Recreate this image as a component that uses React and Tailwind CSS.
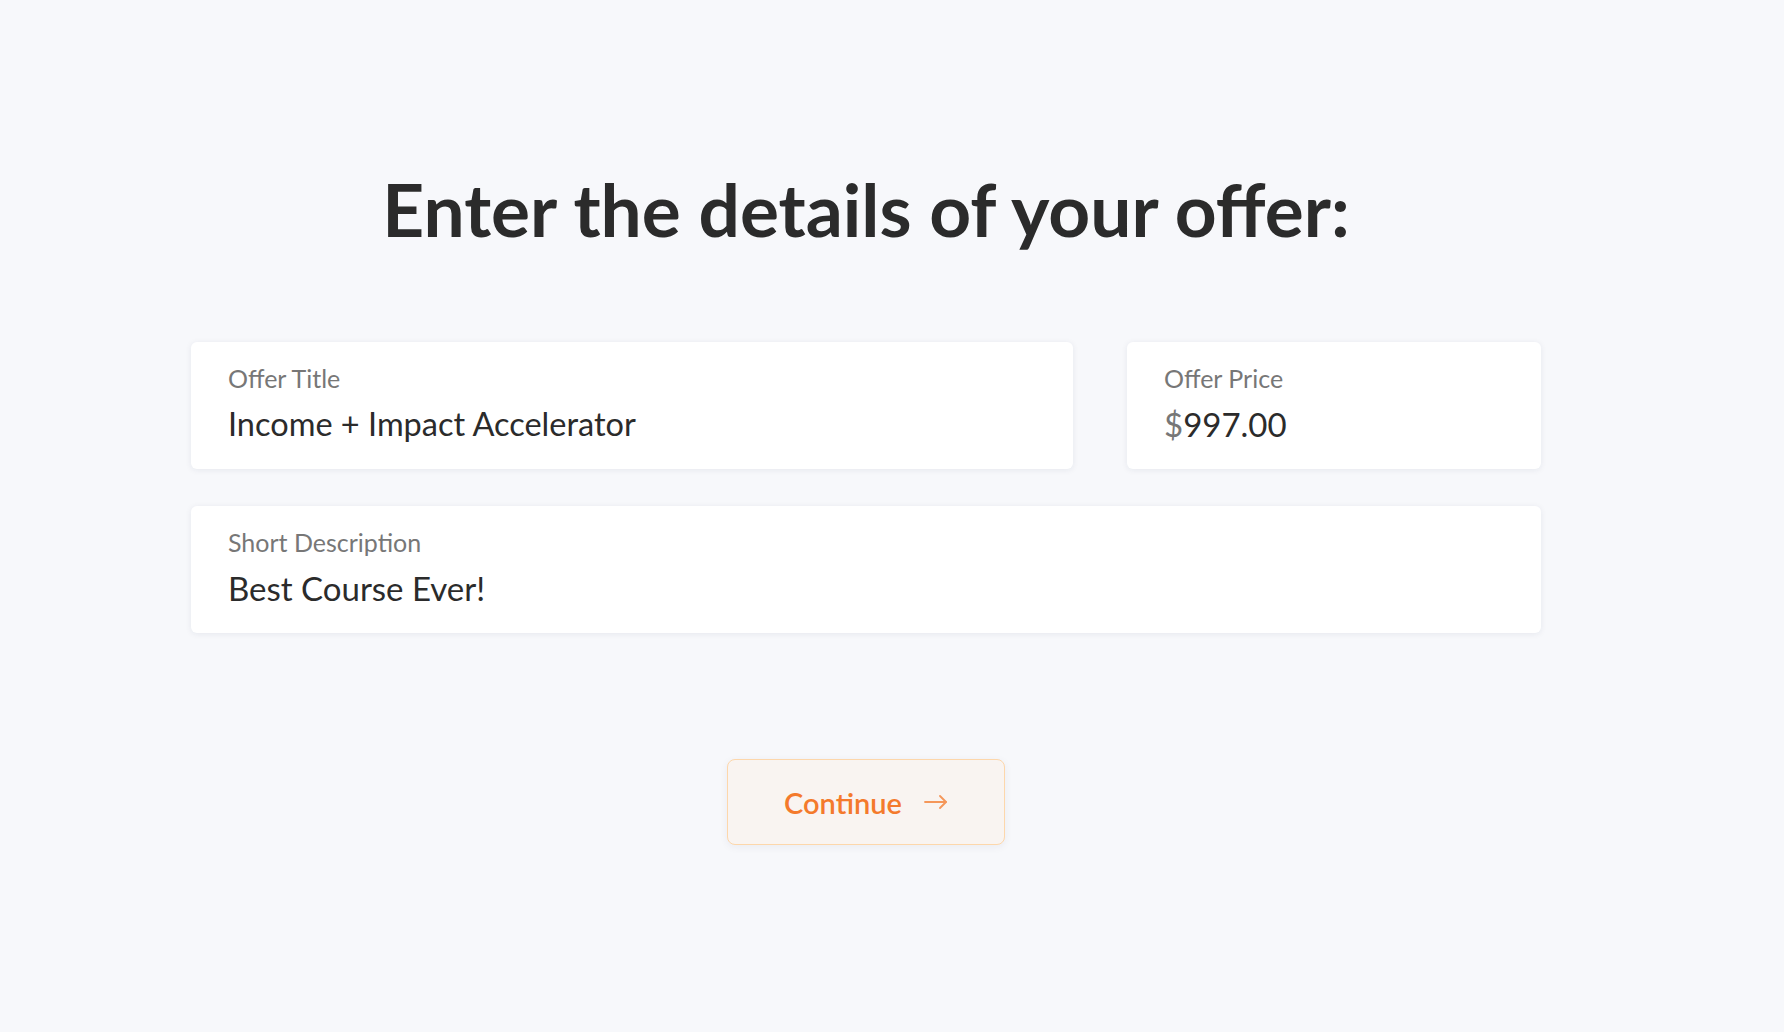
import React from "react";

function Field({ label, children, className = "", valueClass = "text-[33px]" }) {
  return (
    <div
      className={`h-[127px] bg-white rounded-md shadow-[0_1px_6px_rgba(30,40,80,0.08)] pl-[37px] pr-6 pt-[24px] ${className}`}
    >
      <div className="text-[25px] leading-none text-[#777777]">{label}</div>
      <div className={`mt-[17px] leading-none text-[#2b2b2b] ${valueClass}`}>{children}</div>
    </div>
  );
}

export default function App() {
  return (
    <div
      className="min-h-screen w-full bg-[#f7f8fb]"
      style={{ fontFamily: "Lato, 'Open Sans', sans-serif" }}
    >
      <div className="ml-[191px] w-[1350px] pt-[173px] flex flex-col">
        <h1 className="text-[73px] leading-none font-bold text-[#2b2b2b] text-center">
          Enter the details of your offer:
        </h1>
        <div className="mt-[96px] flex gap-[54px]">
          <Field label="Offer Title" className="w-[882px]" valueClass="text-[32.5px]">
            Income + Impact Accelerator
          </Field>
          <Field label="Offer Price" className="flex-1">
            <span className="text-[#777777]">$</span>997.00
          </Field>
        </div>
        <Field label="Short Description" className="mt-[37px]">
          Best Course Ever!
        </Field>
        <div className="mt-[126px] flex justify-center">
          <button className="w-[278px] h-[86px] rounded-lg border border-[#fdd7ab] bg-[#f9f4f1] shadow-[0_2px_8px_rgba(30,40,80,0.06)] flex items-center justify-center gap-[22px]">
            <span className="text-[29px] font-semibold text-[#f47a2c] leading-none">Continue</span>
            <svg width="24" height="14" viewBox="0 0 24 14" fill="none" stroke="#f5975a" strokeWidth="1.8" strokeLinecap="round" strokeLinejoin="round">
              <path d="M1 7h21" />
              <path d="M16 1l6 6-6 6" />
            </svg>
          </button>
        </div>
      </div>
    </div>
  );
}
